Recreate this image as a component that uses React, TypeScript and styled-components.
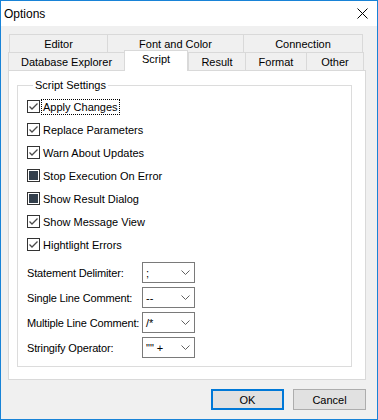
import styled, { createGlobalStyle } from 'styled-components';

const GlobalStyle = createGlobalStyle`
    html, body {
        margin: 0;
        padding: 0;
        background: #ffffff;
    }
`;

const Window = styled.div`
    width: 378px;
    height: 420px;
    box-sizing: border-box;
    border: 1px solid #1883d7;
    background: #f0f0f0;
    display: flex;
    flex-direction: column;
    font-family: "Liberation Sans", Arial, sans-serif;
    font-size: 11px;
    color: #000000;
`;

const TitleBar = styled.div`
    height: 25px;
    flex-shrink: 0;
    background: #ffffff;
    display: flex;
    align-items: center;
    justify-content: space-between;
    padding-left: 3px;
    font-size: 12px;
`;

const CloseButton = styled.div`
    width: 36px;
    height: 25px;
    display: flex;
    align-items: center;
    justify-content: flex-end;
    padding-right: 9px;
`;

const Body = styled.div`
    flex: 1;
    display: flex;
    flex-direction: column;
    padding: 8px 11px 0 7px;
`;

const TabRow = styled.div<{ offset?: number }>`
    display: flex;
    height: 18px;
    margin-left: ${({ offset }) => offset ?? 0}px;
`;

const Tab = styled.div<{ w: number; last?: boolean; selected?: boolean }>`
    box-sizing: border-box;
    width: ${({ w }) => w}px;
    height: ${({ selected }) => (selected ? 21 : 18)}px;
    margin-top: ${({ selected }) => (selected ? -2 : 0)}px;
    position: relative;
    z-index: ${({ selected }) => (selected ? 2 : 0)};
    background: ${({ selected }) => (selected ? '#ffffff' : '#f0f0f0')};
    border-top: 1px solid #d9d9d9;
    border-left: 1px solid #d9d9d9;
    border-right: ${({ last, selected }) => (last || selected ? '1px solid #d9d9d9' : 'none')};
    display: flex;
    align-items: ${({ selected }) => (selected ? 'flex-start' : 'center')};
    padding-top: ${({ selected }) => (selected ? 2 : 0)}px;
    justify-content: center;
    white-space: nowrap;
`;

const Panel = styled.div`
    box-sizing: border-box;
    height: 310px;
    background: #ffffff;
    border: 1px solid #d9d9d9;
    padding: 6px 13px 0 8px;
`;

const Group = styled.fieldset`
    margin: 0;
    border: 1px solid #dcdcdc;
    padding: 2px 0 6px 9px;
    min-width: 0;
`;

const GroupTitle = styled.legend`
    margin-left: 6px;
    padding: 0 2px;
    line-height: 16px;
`;

const CheckRow = styled.div`
    height: 23px;
    display: flex;
    align-items: center;
    gap: 1px;
`;

const Box = styled.span<{ fill?: boolean }>`
    box-sizing: border-box;
    width: 13px;
    height: 13px;
    border: 1px solid #333333;
    background: #ffffff;
    flex-shrink: 0;
    display: flex;
    align-items: center;
    justify-content: center;

    &::after {
        content: '';
        display: ${({ fill }) => (fill ? 'block' : 'none')};
        width: 9px;
        height: 9px;
        background: #333f4c;
    }
`;

const CheckLabel = styled.span<{ focused?: boolean }>`
    display: inline-block;
    padding: 0 1px;
    line-height: 14px;
    border: 1px dotted ${({ focused }) => (focused ? '#000000' : 'transparent')};
    white-space: nowrap;
`;

const Spacer = styled.div`
    height: 4px;
`;

const ComboRow = styled.div`
    height: 25px;
    display: flex;
    align-items: center;
`;

const ComboLabel = styled.span`
    width: 115px;
    white-space: nowrap;
    letter-spacing: -0.15px;
`;

const Combo = styled.div`
    box-sizing: border-box;
    width: 53px;
    height: 21px;
    border: 1px solid #7a7a7a;
    background: #ffffff;
    display: flex;
    align-items: center;
    justify-content: space-between;
    padding: 0 4px 0 3px;
`;

const ButtonBar = styled.div`
    display: flex;
    justify-content: flex-end;
    gap: 9px;
    margin-top: 9px;
`;

const Button = styled.div<{ primary?: boolean }>`
    box-sizing: border-box;
    width: 73px;
    height: 21px;
    background: #e1e1e1;
    border: ${({ primary }) => (primary ? '2px solid #0078d7' : '1px solid #adadad')};
    display: flex;
    align-items: center;
    justify-content: center;
`;

function CheckMark() {
    return (
        <svg width="11" height="11" viewBox="0 0 11 11">
            <polyline points="1.5,5.5 4,8 9.5,2.5" fill="none" stroke="#4a4a4a" strokeWidth="1.3" />
        </svg>
    );
}

function Chevron() {
    return (
        <svg width="9" height="5" viewBox="0 0 9 5">
            <polyline points="0.5,0.5 4.5,4.5 8.5,0.5" fill="none" stroke="#606060" strokeWidth="1" />
        </svg>
    );
}

const checks: { label: string; state: 'check' | 'fill'; focused?: boolean }[] = [
    { label: 'Apply Changes', state: 'check', focused: true },
    { label: 'Replace Parameters', state: 'check' },
    { label: 'Warn About Updates', state: 'check' },
    { label: 'Stop Execution On Error', state: 'fill' },
    { label: 'Show Result Dialog', state: 'fill' },
    { label: 'Show Message View', state: 'check' },
    { label: 'Hightlight Errors', state: 'check' },
];

const combos = [
    { label: 'Statement Delimiter:', value: ';' },
    { label: 'Single Line Comment:', value: '--' },
    { label: 'Multiple Line Comment:', value: '/*' },
    { label: 'Stringify Operator:', value: '"" +' },
];

export default function App() {
    return (
        <>
            <GlobalStyle />
            <Window>
                <TitleBar>
                    <span>Options</span>
                    <CloseButton>
                        <svg width="11" height="11" viewBox="0 0 11 11">
                            <path d="M0.5,0.5 L10.5,10.5 M10.5,0.5 L0.5,10.5" stroke="#000" strokeWidth="1" />
                        </svg>
                    </CloseButton>
                </TitleBar>
                <Body>
                    <TabRow offset={1}>
                        <Tab w={98}>Editor</Tab>
                        <Tab w={136}>Font and Color</Tab>
                        <Tab w={120} last>Connection</Tab>
                    </TabRow>
                    <TabRow>
                        <Tab w={116}>Database Explorer</Tab>
                        <Tab w={64} selected>Script</Tab>
                        <Tab w={57}>Result</Tab>
                        <Tab w={61}>Format</Tab>
                        <Tab w={58} last>Other</Tab>
                    </TabRow>
                    <Panel>
                        <Group>
                            <GroupTitle>Script Settings</GroupTitle>
                            {checks.map((c) => (
                                <CheckRow key={c.label}>
                                    <Box fill={c.state === 'fill'}>
                                        {c.state === 'check' && <CheckMark />}
                                    </Box>
                                    <CheckLabel focused={c.focused}>{c.label}</CheckLabel>
                                </CheckRow>
                            ))}
                            <Spacer />
                            {combos.map((c) => (
                                <ComboRow key={c.label}>
                                    <ComboLabel>{c.label}</ComboLabel>
                                    <Combo>
                                        <span>{c.value}</span>
                                        <Chevron />
                                    </Combo>
                                </ComboRow>
                            ))}
                        </Group>
                    </Panel>
                    <ButtonBar>
                        <Button primary>OK</Button>
                        <Button>Cancel</Button>
                    </ButtonBar>
                </Body>
            </Window>
        </>
    );
}
